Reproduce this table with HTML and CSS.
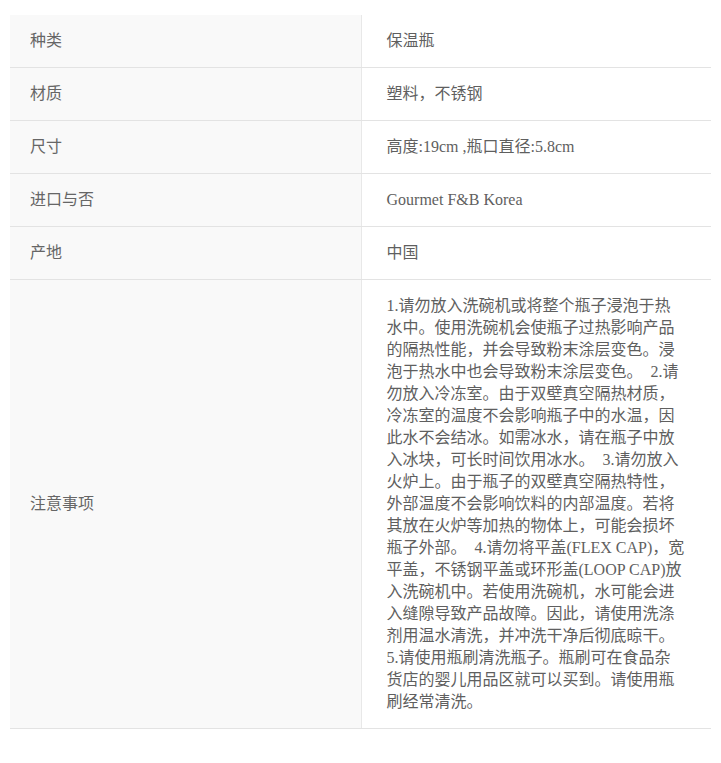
FILE: index.html
```html
<!DOCTYPE html>
<html lang="zh-CN">
<head>
    <meta charset="UTF-8">
    <meta name="viewport" content="width=device-width, initial-scale=1.0">
    <title>商品参数</title>
    <link rel="stylesheet" href="styles.css">
</head>
<body>
    <div class="spec-wrap">
        <table class="spec-table">
            <colgroup>
                <col class="col-label">
                <col class="col-value">
            </colgroup>
            <tr>
                <th>种类</th>
                <td>保温瓶</td>
            </tr>
            <tr>
                <th>材质</th>
                <td>塑料，不锈钢</td>
            </tr>
            <tr>
                <th>尺寸</th>
                <td>高度:19cm ,瓶口直径:5.8cm</td>
            </tr>
            <tr>
                <th>进口与否</th>
                <td>Gourmet F&amp;B Korea</td>
            </tr>
            <tr>
                <th>产地</th>
                <td>中国</td>
            </tr>
            <tr>
                <th>注意事项</th>
                <td>1.请勿放入洗碗机或将整个瓶子浸泡于热水中。使用洗碗机会使瓶子过热影响产品的隔热性能，并会导致粉末涂层变色。浸泡于热水中也会导致粉末涂层变色。 &nbsp;2.请勿放入冷冻室。由于双壁真空隔热材质，冷冻室的温度不会影响瓶子中的水温，因此水不会结冰。如需冰水，请在瓶子中放入冰块，可长时间饮用冰水。 &nbsp;3.请勿放入火炉上。由于瓶子的双壁真空隔热特性，外部温度不会影响饮料的内部温度。若将其放在火炉等加热的物体上，可能会损坏瓶子外部。 &nbsp;4.请勿将平盖(FLEX CAP)，宽平盖，不锈钢平盖或环形盖(LOOP CAP)放入洗碗机中。若使用洗碗机，水可能会进入缝隙导致产品故障。因此，请使用洗涤剂用温水清洗，并冲洗干净后彻底晾干。 5.请使用瓶刷清洗瓶子。瓶刷可在食品杂货店的婴儿用品区就可以买到。请使用瓶刷经常清洗。</td>
            </tr>
        </table>
    </div>
</body>
</html>
```

FILE: styles.css
```css
body {
    margin: 0;
    background: #fff;
    font-family: "Liberation Serif", "Noto Sans CJK SC", serif;
    color: #666;
}
.spec-wrap {
    padding: 15px 10px 0 10px;
}
.spec-table {
    width: 701px;
    table-layout: fixed;
    border-collapse: collapse;
    font-size: 16px;
    line-height: 22px;
}
.col-label {
    width: 351px;
}
.col-value {
    width: 350px;
}
.spec-table th,
.spec-table td {
    height: 22px;
    border-bottom: 1px solid #e3e3e3;
    vertical-align: middle;
    text-align: left;
    font-weight: normal;
}
.spec-table th {
    padding: 15px 10px 15px 20px;
    background: #f9f9f9;
    border-right: 1px solid #e8e8e8;
    color: #666;
}
.spec-table td {
    padding: 15px 26px 15px 25px;
    color: #5f5f5f;
}
```
